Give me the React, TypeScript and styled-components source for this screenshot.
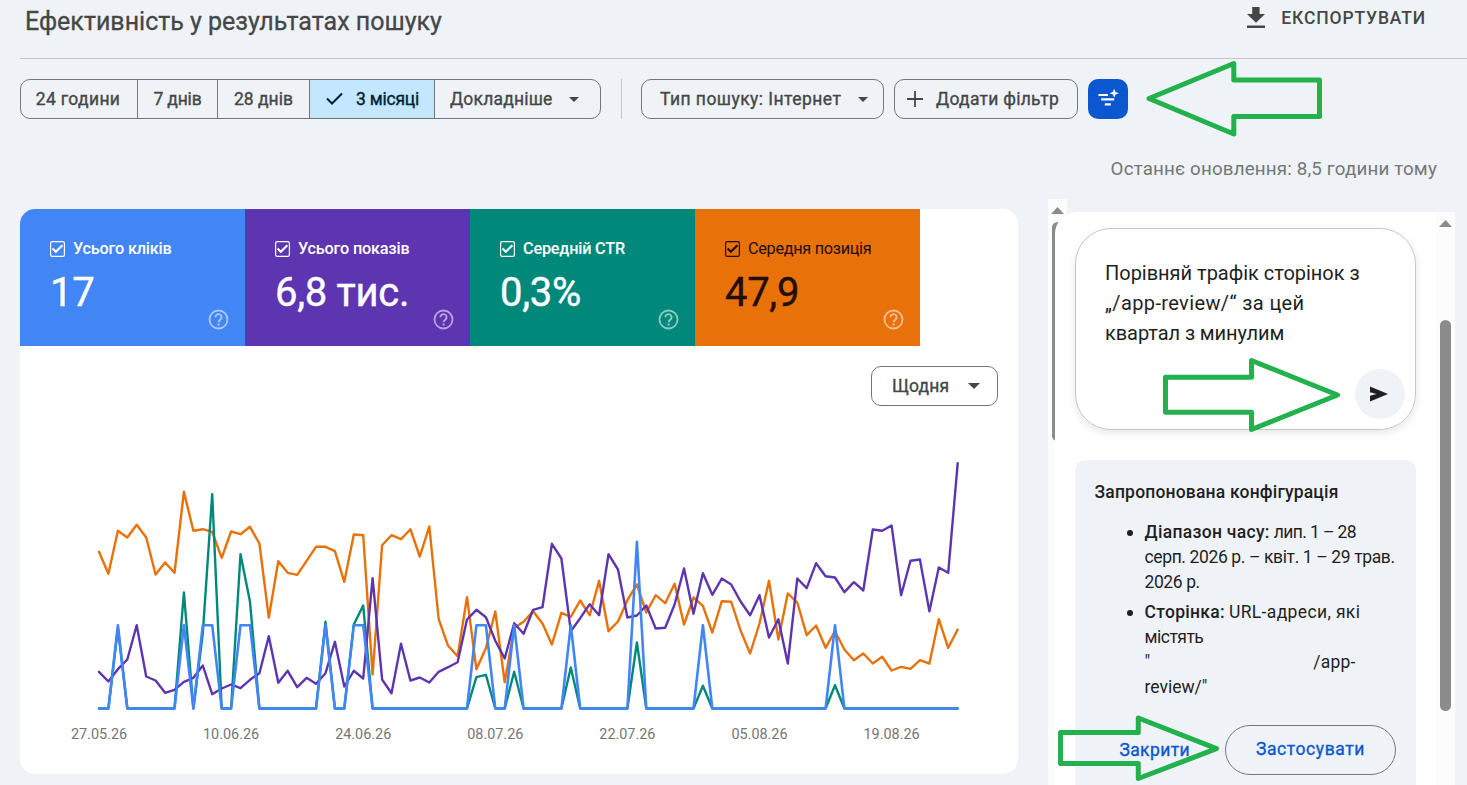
import React, { useState } from "react";
import styled, { createGlobalStyle, css } from "styled-components";

const GlobalStyle = createGlobalStyle`
  * {
    box-sizing: border-box;
  }

  body {
    margin: 0;
    overflow: hidden;
    background-color: #eff3f8;
    color: #444746;
    font-family: Roboto, Arial, sans-serif;
  }

  button {
    font-family: inherit;
    background: none;
    cursor: pointer;
  }
`;

const Page = styled.div`
  width: 1467px;
  height: 785px;
  display: flex;
  flex-direction: column;
  position: relative;
  overflow: hidden;
`;

const Header = styled.header`
  display: flex;
  flex-shrink: 0;
  justify-content: space-between;
  height: 59px;
  margin-left: 20px;
  padding: 0 41px 0 5px;
  border-bottom: 1px solid #c4c7c9;
`;

const Title = styled.h1`
  margin: 0;
  font-size: 25px;
  font-weight: 400;
  line-height: 43px;
  -webkit-text-stroke: 0.3px #444746;
  white-space: nowrap;
`;

const ExportButton = styled.button`
  display: flex;
  align-items: center;
  gap: 16px;
  height: 36px;
  padding: 0;
  border: none;
  color: #444746;
  font-size: 17.5px;
  font-weight: 500;
  letter-spacing: 0.87px;
`;

const FilterBar = styled.div`
  display: flex;
  flex-shrink: 0;
  height: 40px;
  margin: 20px 0 0 20px;
`;

const outlined = css`
  border: 1px solid #747775;
  border-radius: 10px;
  color: #444746;
  font-size: 17.5px;
  font-weight: 400;
  -webkit-text-stroke: 0.35px currentColor;
  white-space: nowrap;
`;

const RangeGroup = styled.div`
  ${outlined}
  display: grid;
  grid-template-columns: 116px 80px 92px 125px 166px;
  overflow: hidden;
`;

const RangeButton = styled.button<{ $active?: boolean; $track?: number }>`
  display: flex;
  align-items: center;
  justify-content: center;
  padding: 0;
  border: none;
  border-left: 1px solid #747775;
  background-color: ${(props) => (props.$active ? "#c2e7ff" : "transparent")};
  color: ${(props) => (props.$active ? "#001d35" : "#444746")};
  font-size: inherit;
  font-weight: inherit;
  letter-spacing: ${(props) => props.$track ?? 0}px;

  &:first-child {
    border-left: none;
    padding-right: 2px;
  }

  svg {
    flex-shrink: 0;
  }
`;

const MoreButton = styled(RangeButton)`
  justify-content: space-between;
  padding: 0 21px 0 15px;
`;

const Divider = styled.div`
  width: 1px;
  margin: 0 19px 0 20px;
  background-color: #c4c7c9;
`;

const FilterChip = styled.button<{ $width: number; $track: number }>`
  ${outlined}
  display: flex;
  align-items: center;
  justify-content: space-between;
  width: ${(props) => props.$width}px;
  margin-right: 10px;
  padding: 0 15px 0 18px;
  letter-spacing: ${(props) => props.$track}px;
`;

const AddChip = styled(FilterChip)`
  justify-content: flex-start;
  gap: 13px;
  padding: 0 0 0 12px;
`;

const AiButton = styled.button`
  display: flex;
  align-items: center;
  justify-content: center;
  width: 40px;
  padding: 0;
  border: none;
  border-radius: 10px;
  background-color: #0b57d0;
`;

const Updated = styled.div`
  flex-shrink: 0;
  height: 80px;
  padding: 38px 30px 0 0;
  color: #747775;
  font-size: 18.75px;
  letter-spacing: 0.17px;
  line-height: 24px;
  text-align: right;
`;

const Main = styled.main`
  display: grid;
  grid-template-columns: 998px 407px;
  column-gap: 30px;
  height: 586px;
  padding-left: 20px;
`;

const ReportCard = styled.section`
  height: 565px;
  margin-top: 10px;
  border-radius: 15px;
  background-color: #fff;
  overflow: hidden;
`;

const Metrics = styled.div`
  display: grid;
  grid-template-columns: repeat(4, 225px);
  height: 137px;
`;

const Metric = styled.div<{ $color: string; $dark?: boolean }>`
  display: flex;
  flex-direction: column;
  padding: 29px 16px 0 30px;
  background-color: ${(props) => props.$color};
  color: ${(props) => (props.$dark ? "#1f0f04" : "#fff")};
`;

const MetricLabel = styled.div<{ $dark?: boolean }>`
  display: flex;
  align-items: center;
  gap: 8px;
  height: 21px;
  font-size: 16.25px;
  font-weight: ${(props) => (props.$dark ? 400 : 500)};
  letter-spacing: ${(props) => (props.$dark ? -0.3 : -0.2)}px;
  white-space: nowrap;
`;

const MetricValue = styled.div`
  height: 48px;
  margin-top: 8px;
  font-size: 40px;
  line-height: 52px;
  letter-spacing: -0.3px;
  -webkit-text-stroke: 0.4px currentColor;
`;

const HelpIcon = styled.svg`
  align-self: flex-end;
  margin-top: -6px;
  opacity: 0.55;
`;

const ChartTools = styled.div`
  display: flex;
  justify-content: flex-end;
  padding: 20px 20px 0 0;
`;

const GranularityButton = styled.button`
  ${outlined}
  display: flex;
  align-items: center;
  justify-content: space-between;
  width: 127px;
  height: 40px;
  padding: 0 17px 0 20px;
  letter-spacing: 0.15px;
`;

const ChartSvg = styled.svg`
  display: block;
  margin-top: 34px;
`;

const AxisLabels = styled.div`
  display: flex;
  gap: 62.1px;
  margin: 3px 0 0 44px;
  color: #757575;
  font-size: 14.4px;
  line-height: 20px;
`;

const AxisLabel = styled.span`
  width: 70px;
  text-align: center;
  white-space: nowrap;
`;

const Assistant = styled.aside`
  display: grid;
  grid-template-columns: 7px 400px;
  background: linear-gradient(#fcfcfc, #fcfcfc) 0 0 / 19px 100% no-repeat;
`;

const OuterTrack = styled.div`
  display: flex;
  flex-direction: column;
  width: 19px;
  padding: 8px 0 0 3px;
`;

const OuterThumb = styled.div`
  width: 11px;
  height: 219px;
  margin: 8px 0 0 1px;
  border-radius: 6px;
  background-color: #8b8b8b;
`;

const Panel = styled.div`
  display: flex;
  position: relative;
  height: 573px;
  margin-top: 13px;
  border-radius: 22px 0 0 0;
  background-color: #fff;
  overflow: hidden;
`;

const PanelBody = styled.div`
  width: 361px;
  padding: 16px 0 0 20px;
`;

const InnerTrack = styled.div`
  display: flex;
  flex-direction: column;
  align-items: center;
  width: 19px;
  margin-left: 20px;
  padding-top: 8px;
  background-color: #fcfcfc;
`;

const InnerThumb = styled.div`
  width: 11px;
  height: 391px;
  margin-top: 93px;
  border-radius: 6px;
  background-color: #8b8b8b;
`;

const PromptBox = styled.div`
  display: flex;
  flex-direction: column;
  width: 341px;
  height: 202px;
  padding: 29px 10px 10px 29px;
  border: 1px solid #c4c7c5;
  border-radius: 36px;
  box-shadow: 0 3px 8px rgba(0, 0, 0, 0.1);
`;

const PromptLine = styled.div<{ $track: number }>`
  color: #1f1f1f;
  font-size: 20px;
  line-height: 30px;
  letter-spacing: ${(props) => props.$track}px;
  white-space: nowrap;
`;

const SendButton = styled.button`
  display: flex;
  align-items: center;
  justify-content: center;
  align-self: flex-end;
  flex-shrink: 0;
  width: 50px;
  height: 50px;
  margin-top: 21px;
  padding: 0 2px 0 0;
  border: none;
  border-radius: 50%;
  background-color: #eff3f8;
`;

const Config = styled.div`
  width: 341px;
  height: 400px;
  margin-top: 30px;
  padding: 20px 20px 20px 19.5px;
  border-radius: 10px;
  background-color: #eff3f8;
  color: #1f1f1f;
`;

const ConfigTitle = styled.h2`
  margin: 0;
  font-size: 17.5px;
  font-weight: 500;
  line-height: 25px;
  letter-spacing: 0.19px;
`;

const ConfigList = styled.ul`
  margin: 15px 0 0;
  padding-left: 50px;
  list-style: none;
`;

const ConfigItem = styled.li`
  margin-bottom: 5px;
  position: relative;

  &::before {
    content: "";
    position: absolute;
    left: -18px;
    top: 10px;
    width: 6px;
    height: 6px;
    border-radius: 50%;
    background-color: #1f1f1f;
  }
`;

const ConfigLine = styled.div<{ $track?: number }>`
  display: flex;
  font-size: 17.5px;
  line-height: 25px;
  letter-spacing: ${(props) => props.$track ?? 0}px;
  white-space: pre;
`;

const Term = styled.strong<{ $track: number }>`
  margin-right: 4px;
  font-weight: 500;
  letter-spacing: ${(props) => props.$track}px;
`;

const PathPart = styled.span`
  margin-left: 163px;
`;

const ConfigActions = styled.div`
  display: flex;
  justify-content: flex-end;
  align-items: center;
  gap: 35px;
  margin-top: 25px;
`;

const TextButton = styled.button`
  padding: 0;
  border: none;
  color: #0b57d0;
  font-size: 17.5px;
  font-weight: 400;
  letter-spacing: 0.4px;
  -webkit-text-stroke: 0.35px currentColor;
`;

const ApplyButton = styled(TextButton)`
  width: 171px;
  height: 50px;
  padding-bottom: 2px;
  border: 1px solid #747775;
  border-radius: 25px;
  letter-spacing: 0.6px;
`;

// callout arrows are drawn over the page
const Callout = styled.svg<{ $left: number; $top: number }>`
  position: absolute;
  left: ${(props) => props.$left}px;
  top: ${(props) => props.$top}px;
  overflow: visible;
  pointer-events: none;
  fill: none;
  stroke: #22b14c;
  stroke-width: 5;
  stroke-linejoin: round;
`;

const STEP = 9.436;
const BASELINE = 258.5;

// values are distances from the bottom axis, in thirds of a pixel
const position = [
  470, 404, 533, 513, 551, 513, 402, 438, 407, 650, 533, 538, 530, 452, 531, 523,
  545, 495, 273, 442, 407, 401, 443, 485, 485, 472, 380, 522, 520, 102, 490, 520,
  508, 538, 456, 546, 268, 188, 157, 334, 118, 181, 291, 79, 242, 260, 292, 255,
  192, 287, 275, 324, 280, 383, 232, 261, 325, 372, 288, 340, 316, 374, 252, 333,
  308, 228, 322, 320, 234, 165, 255, 383, 207, 345, 318, 220, 249, 182, 232, 177,
  145, 165, 135, 155, 114, 125, 119, 145, 135, 268, 182, 237,
];

const impressions = [
  110, 81, 118, 147, 250, 96, 84, 47, 56, 80, 92, 129, 43, 60, 72, 61, 86, 106,
  217, 77, 113, 64, 92, 74, 106, 200, 66, 113, 90, 391, 87, 46, 194, 84, 93, 78,
  110, 124, 139, 267, 296, 274, 203, 150, 256, 224, 296, 304, 494, 450, 232, 271,
  313, 280, 463, 417, 273, 279, 309, 240, 242, 312, 420, 284, 406, 341, 390, 372,
  321, 280, 340, 213, 268, 135, 390, 361, 436, 397, 393, 349, 379, 354, 537, 533,
  549, 340, 443, 447, 292, 423, 407, 736,
];

const spread = (peaks: Record<number, number>) =>
  Array.from({ length: 92 }, (_, i) => peaks[i] ?? 0);

const clicks = spread({
  2: 250, 9: 250, 11: 250, 12: 250, 15: 250, 16: 250, 24: 250, 27: 250,
  28: 250, 40: 250, 41: 250, 44: 250, 50: 250, 57: 500, 64: 250, 78: 250,
});

const ctr = spread({
  2: 240, 9: 348, 11: 225, 12: 643, 15: 463, 16: 320, 24: 260, 27: 252,
  28: 309, 40: 94, 41: 101, 44: 110, 50: 123, 57: 198, 64: 68, 78: 70,
});

const series = [
  { color: "#e8710a", width: 2.4, values: position },
  { color: "#00897b", width: 2.4, values: ctr },
  { color: "#5e35b1", width: 2.4, values: impressions },
  { color: "#4285f4", width: 2.6, values: clicks },
];

const dates = [
  "27.05.26",
  "10.06.26",
  "24.06.26",
  "08.07.26",
  "22.07.26",
  "05.08.26",
  "19.08.26",
];

const metrics = [
  { label: "Усього кліків", value: "17", color: "#4285f4" },
  { label: "Усього показів", value: "6,8 тис.", color: "#5e35b1" },
  { label: "Середній CTR", value: "0,3%", color: "#00897b" },
  { label: "Середня позиція", value: "47,9", color: "#e8710a", dark: true },
];

const ranges = [
  { label: "24 години", track: 0.35 },
  { label: "7 днів", track: -0.15 },
  { label: "28 днів", track: 0 },
];

const toPoints = (values: number[]) =>
  values
    .map((v, i) => `${(79 + i * STEP).toFixed(1)},${(BASELINE - v / 3).toFixed(1)}`)
    .join(" ");

const Caret: React.FC<{ size?: number }> = ({ size = 10 }) => (
  <svg width={size} height={size / 2} viewBox='0 0 10 5'>
    <path d='M0 0h10L5 5z' fill='#444746' />
  </svg>
);

const ScrollArrow: React.FC = () => (
  <svg width='13' height='7' viewBox='0 0 13 7'>
    <path d='M0 7L6.5 0L13 7z' fill='#8b8b8b' />
  </svg>
);

const Checkbox: React.FC = () => (
  <svg width='15' height='16' viewBox='0 0 15 16' fill='none' stroke='currentColor'>
    <rect x='0.6' y='0.6' width='13.8' height='14.8' rx='1.6' strokeWidth='1.2' />
    <path d='M2.6 7.600l3.200 3.200 6.600-6.600' strokeWidth='2.100' />
  </svg>
);

const App: React.FC = () => {
  const [range, setRange] = useState("3 місяці");

  return (
    <Page>
      <GlobalStyle />
      <Header>
        <Title>Ефективність у результатах пошуку</Title>
        <ExportButton>
          <svg width='18' height='22' viewBox='0 0 18 22' fill='#444746'>
            <path d='M5.2 0h7.4v7H18l-9 8.800L0 7h5.200zM0 18.400h18V21H0z' />
          </svg>
          ЕКСПОРТУВАТИ
        </ExportButton>
      </Header>

      <FilterBar>
        <RangeGroup>
          {ranges.map((item) => (
            <RangeButton
              key={item.label}
              $active={range === item.label}
              $track={item.track}
              onClick={() => setRange(item.label)}
            >
              {item.label}
            </RangeButton>
          ))}
          <RangeButton
            $active={range === "3 місяці"}
            $track={-0.2}
            onClick={() => setRange("3 місяці")}
          >
            <svg width='31' height='14' viewBox='0 0 31 14' fill='none'>
              <path d='M2 6.500l5 5L17 1.500' stroke='#001d35' strokeWidth='2' />
            </svg>
            3 місяці
          </RangeButton>
          <MoreButton $track={0.2}>
            Докладніше
            <Caret />
          </MoreButton>
        </RangeGroup>
        <Divider />
        <FilterChip $width={243} $track={0.45}>
          Тип пошуку: Інтернет
          <Caret />
        </FilterChip>
        <AddChip $width={184} $track={0.27}>
          <svg width='16' height='16' viewBox='0 0 16 16'>
            <path d='M8 0v16M0 8h16' stroke='#444746' strokeWidth='1.8' />
          </svg>
          Додати фільтр
        </AddChip>
        <AiButton aria-label='AI'>
          <svg width='22' height='20' viewBox='0 0 22 20' fill='#fff'>
            <path d='M1.500 5h9.500v2H1.500zM4.200 9.200h13v2.300H4.200zM7.800 14.200h6v2.200h-6z' />
            <path d='M17.200 -0.400l1.300 3.300 3.300 1.300-3.300 1.300-1.300 3.300-1.300-3.300-3.300-1.300 3.300-1.300z' />
          </svg>
        </AiButton>
      </FilterBar>

      <Updated>Останнє оновлення: 8,5 години тому</Updated>

      <Main>
        <ReportCard>
          <Metrics>
            {metrics.map((metric) => (
              <Metric key={metric.label} $color={metric.color} $dark={metric.dark}>
                <MetricLabel $dark={metric.dark}>
                  <Checkbox />
                  {metric.label}
                </MetricLabel>
                <MetricValue>{metric.value}</MetricValue>
                <HelpIcon width='21' height='21' viewBox='0 0 21 21' fill='none' stroke='#fff'>
                  <circle cx='10.500' cy='10.500' r='9' strokeWidth='1.800' />
                  <path
                    d='M7.400 8.300a3.100 3.100 0 1 1 4.900 2.500c-1.100.8-1.700 1.200-1.700 2.500'
                    strokeWidth='1.900'
                  />
                  <path d='M10.600 14.500v2' strokeWidth='2' />
                </HelpIcon>
              </Metric>
            ))}
          </Metrics>
          <ChartTools>
            <GranularityButton>
              Щодня
              <Caret size={12} />
            </GranularityButton>
          </ChartTools>
          <ChartSvg width='998' height='282' viewBox='0 -10 998 282' fill='none'>
            {series.map((line) => (
              <polyline
                key={line.color}
                points={toPoints(line.values)}
                stroke={line.color}
                strokeWidth={line.width}
                strokeLinejoin='round'
                strokeLinecap='round'
              />
            ))}
          </ChartSvg>
          <AxisLabels>
            {dates.map((date) => (
              <AxisLabel key={date}>{date}</AxisLabel>
            ))}
          </AxisLabels>
        </ReportCard>

        <Assistant>
          <OuterTrack>
            <ScrollArrow />
            <OuterThumb />
          </OuterTrack>
          <Panel>
            <PanelBody>
              <PromptBox>
                <PromptLine $track={-0.02}>Порівняй трафік сторінок з</PromptLine>
                <PromptLine $track={0.38}>„/app-review/“ за цей</PromptLine>
                <PromptLine $track={-0.07}>квартал з минулим</PromptLine>
                <SendButton aria-label='Send'>
                  <svg width='18' height='16' viewBox='0 0 18 16'>
                    <path d='M0 0.500L18 8L0 15.500V9.700L6.500 8L0 6.300z' fill='#1f1f1f' />
                  </svg>
                </SendButton>
              </PromptBox>
              <Config>
                <ConfigTitle>Запропонована конфігурація</ConfigTitle>
                <ConfigList>
                  <ConfigItem>
                    <ConfigLine $track={-0.6}>
                      <Term $track={0.3}>Діапазон часу:</Term>лип. 1 – 28
                    </ConfigLine>
                    <ConfigLine $track={-0.38}>серп. 2026 р. – квіт. 1 – 29 трав.</ConfigLine>
                    <ConfigLine $track={-0.4}>2026 р.</ConfigLine>
                  </ConfigItem>
                  <ConfigItem>
                    <ConfigLine $track={0.36}>
                      <Term $track={0.3}>Сторінка:</Term>URL-адреси, які
                    </ConfigLine>
                    <ConfigLine $track={-0.5}>містять</ConfigLine>
                    <ConfigLine $track={0.2}>
                      "<PathPart>/app-</PathPart>
                    </ConfigLine>
                    <ConfigLine>review/"</ConfigLine>
                  </ConfigItem>
                </ConfigList>
                <ConfigActions>
                  <TextButton>Закрити</TextButton>
                  <ApplyButton>Застосувати</ApplyButton>
                </ConfigActions>
              </Config>
            </PanelBody>
            <InnerTrack>
              <ScrollArrow />
              <InnerThumb />
            </InnerTrack>
          </Panel>
        </Assistant>
      </Main>

      <Callout $left={1146} $top={60} width='176' height='77'>
        <path d='M3 38.500L87.800 3.500V20H173.500V56.400H87.800V74z' />
      </Callout>
      <Callout $left={1163} $top={357} width='178' height='76'>
        <path d='M2.500 20.300H88.500V3.500L174.500 38L88.500 72.500V55.300H2.500z' />
      </Callout>
      <Callout $left={1058} $top={715} width='161' height='67'>
        <path d='M2.500 17.500H80.300V3L158.500 33.700L80.300 63.500V48.500H2.500z' />
      </Callout>
    </Page>
  );
};

export default App;
